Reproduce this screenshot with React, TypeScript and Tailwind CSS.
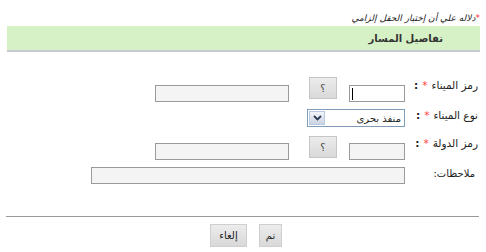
import React from 'react';

const QuestionButton = () => (
  <button
    type="button"
    className="flex h-[22px] w-[28px] items-center justify-center border border-[#c6c6c6] bg-gradient-to-b from-[#ececec] to-[#d9d9d9] text-[10px] text-[#444]"
  >
    ؟
  </button>
);

const TextBox = ({ width, focused }: { width: string; focused?: boolean }) => (
  <div
    className={`relative h-[17px] border border-[#9a9a9a] ${width} ${
      focused ? 'bg-white' : 'bg-[#f4f4f4]'
    }`}
  >
    {focused && <span className="absolute left-[2px] top-[2px] h-[12px] w-px bg-black" />}
  </div>
);

const Label = ({ text, required, top }: { text: string; required?: boolean; top: string }) => (
  <div className={`flex w-[76px] shrink-0 items-center pr-[3px] text-[10.5px] leading-[13px] text-[#222] ${top}`}>
    <span>{text}</span>
    {required && <span className="mr-[4px] text-[#ff3b3b]">*</span>}
    {required && <span className="mr-[4px] font-bold">:</span>}
  </div>
);

export default function App() {
  return (
    <div
      dir="rtl"
      className="h-[252px] w-[486px] overflow-hidden bg-white font-['DejaVu_Sans',sans-serif] text-[11px]"
    >
      <div className="pr-[6px] pt-[12px] text-[9px] italic leading-[13px] text-[#222]">
        <span className="text-[#ff2a2a]">*</span>دلاله علي أن إختيار الحقل إلزامي
      </div>

      <div className="ml-[7px] mr-[6px] mt-[1px] border-b-2 border-[#cacad2]">
        <div className="flex h-[24px] items-center bg-[#d6f1c6] pr-[37px] text-[10px] font-bold text-[#333]">
          تفاصيل المسار
        </div>
      </div>

      <div className="mt-[25px] flex flex-col pr-[5px]">
        <div className="flex items-start">
          <Label text="رمز الميناء" required top="mt-[2px]" />
          <div className="mt-[8px]">
            <TextBox width="w-[56px]" focused />
          </div>
          <div className="mr-[12px]">
            <QuestionButton />
          </div>
          <div className="mr-[20px] mt-[8px]">
            <TextBox width="w-[134px]" />
          </div>
        </div>

        <div className="mt-[7px] flex items-start">
          <Label text="نوع الميناء" required top="mt-0" />
          <div className="flex h-[18px] w-[98px] items-stretch border border-[#7f9db9] bg-white">
            <div className="flex flex-1 items-center pr-[3px] text-[10px] text-[#222]">منفذ بحرى</div>
            <div className="m-px flex w-[16px] items-center justify-center border border-[#b8c8e0] bg-gradient-to-b from-[#f2f4f8] to-[#cdd5e2]">
              <svg width="9" height="6" viewBox="0 0 9 6">
                <path d="M1 1 L4.5 4.5 L8 1" fill="none" stroke="#2b3b55" strokeWidth="1.8" />
              </svg>
            </div>
          </div>
        </div>

        <div className="mt-[9px] flex items-start">
          <Label text="رمز الدولة" required top="mt-[1px]" />
          <div className="mt-[7px]">
            <TextBox width="w-[56px]" />
          </div>
          <div className="mr-[12px]">
            <QuestionButton />
          </div>
          <div className="mr-[20px] mt-[7px]">
            <TextBox width="w-[134px]" />
          </div>
        </div>

        <div className="mt-[7px] flex items-start">
          <div className="flex w-[76px] shrink-0 pr-[6px] text-[10px] leading-[13px] text-[#222]">ملاحظات:</div>
          <TextBox width="w-[314px]" />
        </div>
      </div>

      <div className="ml-[6px] mr-[7px] mt-[32px] h-px bg-[#9a9a9a]" />

      <div className="mt-[7px] flex justify-center gap-[12px] pl-[6px]">
        <button
          type="button"
          className="h-[23px] w-[23px] border border-[#cfcfcf] bg-gradient-to-b from-[#ececec] to-[#d9d9d9] text-[10px] text-[#222]"
        >
          تم
        </button>
        <button
          type="button"
          className="h-[23px] w-[37px] border border-[#cfcfcf] bg-gradient-to-b from-[#ececec] to-[#d9d9d9] text-[10px] text-[#222]"
        >
          إلغاء
        </button>
      </div>
    </div>
  );
}
